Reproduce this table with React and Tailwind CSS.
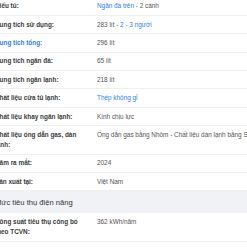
import React from 'react';

const Link = ({ children }) => <span className="text-[#2f80ed]">{children}</span>;

const rows1 = [
  { label: 'Kiểu tủ:', value: <><Link>Ngăn đá trên</Link> - 2 cánh</> },
  { label: 'Dung tích sử dụng:', value: <>283 lít - <Link>2 - 3 người</Link></> },
  { label: <Link>Dung tích tổng:</Link>, value: '296 lít' },
  { label: 'Dung tích ngăn đá:', value: '65 lít' },
  { label: 'Dung tích ngăn lạnh:', value: '218 lít' },
  { label: 'Chất liệu cửa tủ lạnh:', value: <Link>Thép không gỉ</Link> },
  { label: 'Chất liệu khay ngăn lạnh:', value: 'Kính chịu lực' },
  { label: 'Chất liệu ống dẫn gas, dàn lạnh:', value: 'Ống dẫn gas bằng Nhôm - Chất liệu dàn lạnh bằng Sắt' },
  { label: 'Năm ra mắt:', value: '2024' },
  { label: 'Sản xuất tại:', value: 'Việt Nam' },
];

const rows2 = [
  { label: 'Công suất tiêu thụ công bố theo TCVN:', value: '362 kWh/năm' },
];

const Row = ({ label, value }) => (
  <li className="flex items-start border-b border-[#f0f0f0] py-[3.7px] leading-[10px]">
    <div className="w-[102px] shrink-0 pr-[10px] font-bold text-[#3a3a3a]">{label}</div>
    <div className="whitespace-nowrap text-[#555]">{value}</div>
  </li>
);

export default function App() {
  return (
    <div className="h-[247px] w-[247px] overflow-hidden bg-white" style={{ fontFamily: '"Liberation Sans", Arial, sans-serif' }}>
      <div className="-ml-[5px] -mt-[2.4px] w-[320px] text-[6.4px]">
        <ul>
          {rows1.map((r, i) => <Row key={i} {...r} />)}
        </ul>
        <div className="flex h-[22px] items-center bg-[#f1f2f6] text-[7.6px] text-[#333]">Mức tiêu thụ điện năng</div>
        <ul>
          {rows2.map((r, i) => <Row key={i} {...r} />)}
        </ul>
      </div>
    </div>
  );
}
